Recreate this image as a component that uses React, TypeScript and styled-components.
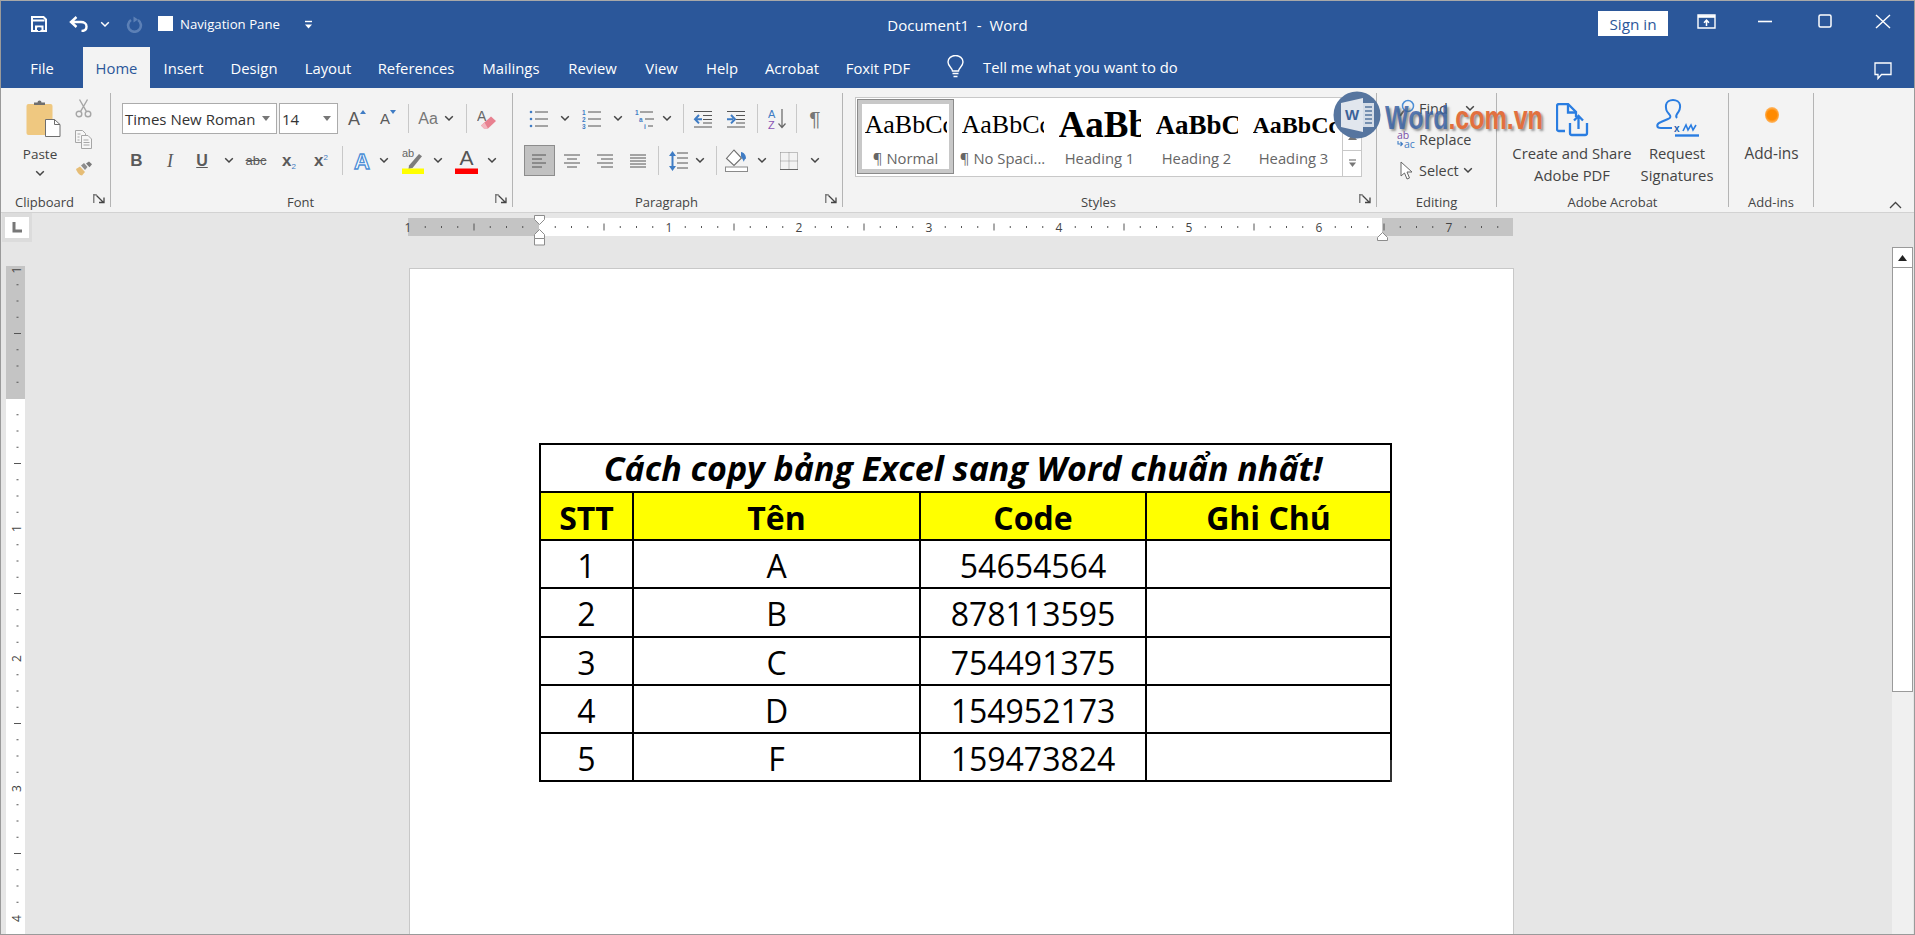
import React from "react";
import styled, { createGlobalStyle } from "styled-components";

const Global = createGlobalStyle`
  html, body { margin: 0; padding: 0; height: 100%; overflow: hidden; background: #e6e6e6; }
  #root { height: 100%; }
  * { box-sizing: border-box; }
`;

const UI = `"Open Sans", "Noto Sans", sans-serif`;

const Window = styled.div`
  position: relative;
  width: 1915px;
  height: 935px;
  display: flex;
  flex-direction: column;
  border: 1px solid #9a9a9a;
  border-top-color: #a8a8a8;
  font-family: ${UI};
  overflow: hidden;
  background: #e6e6e6;
`;
const TitleBar = styled.header`
  height: 46px;
  background: #2b579a;
  display: grid;
  grid-template-columns: 1fr auto 1fr;
  align-items: center;
  color: #fff;
  font-size: 13.2px;
`;
const QuickAccess = styled.div`
  display: flex;
  align-items: center;
  padding-left: 30px;
`;
const Qat = styled.span<{ $ml?: number }>`
  display: flex;
  align-items: center;
  margin-left: ${(p) => p.$ml ?? 0}px;
`;
const Checkbox = styled.span`
  width: 15px;
  height: 15px;
  background: #fff;
  margin-left: 15px;
  margin-right: 7px;
  margin-bottom: 1px;
`;
const DocTitle = styled.div`
  font-size: 15px;
  white-space: pre;
  margin-top: 2px;
`;
const WinControls = styled.div`
  display: flex;
  align-items: center;
  justify-content: flex-end;
  padding-right: 23px;
`;
const SignIn = styled.button`
  width: 70px;
  height: 25px;
  border: 0;
  padding: 0;
  background: #fff;
  color: #2b579a;
  font: 15.3px ${UI};
  margin-bottom: 1px;
`;
const WinBtn = styled.span<{ $ml: number }>`
  display: flex;
  margin-left: ${(p) => p.$ml}px;
  margin-bottom: 6px;
`;
const TabBar = styled.nav`
  height: 41px;
  background: #2b579a;
  display: flex;
  align-items: stretch;
  color: #fff;
  font-size: 14.8px;
`;
const Tab = styled.div<{ $w: number; $active?: boolean }>`
  width: ${(p) => p.$w}px;
  display: flex;
  align-items: center;
  justify-content: center;
  background: ${(p) => (p.$active ? "#f3f3f3" : "transparent")};
  color: ${(p) => (p.$active ? "#2b579a" : "#fff")};
`;
const TellMe = styled.div`
  display: flex;
  align-items: center;
  margin-left: 24px;
  margin-top: -2px;
  gap: 19px;
`;
const CommentBtn = styled.div`
  margin-left: auto;
  margin-right: 22px;
  display: flex;
  align-items: center;
  padding-top: 7px;
`;
const Ribbon = styled.section`
  height: 125px;
  background: #f3f3f3;
  border-bottom: 1px solid #d2d2d2;
  display: flex;
  align-items: flex-start;
  padding-top: 5px;
  color: #444;
  font-size: 14.8px;
`;
const Group = styled.div<{ $w: number }>`
  width: ${(p) => p.$w}px;
  height: 114px;
  flex: none;
  border-right: 1px solid #b4b4b4;
  display: flex;
  flex-direction: column;
`;
const GroupBody = styled.div<{ $pt?: number; $row?: boolean }>`
  flex: 1;
  min-height: 0;
  padding-top: ${(p) => p.$pt ?? 10}px;
  display: flex;
  flex-direction: ${(p) => (p.$row ? "row" : "column")};
`;
const GroupLabel = styled.div<{ $launcher?: boolean }>`
  position: relative;
  height: 14px;
  margin-bottom: -2px;
  padding-right: ${(p) => (p.$launcher ? 22 : 0)}px;
  font-size: 13px;
  line-height: 14px;
  text-align: center;
  color: #444;
`;
const Launcher = styled.span`
  position: absolute;
  right: 5px;
  top: -1px;
  display: flex;
`;
const ToolRow = styled.div<{ $mt?: number }>`
  height: 31px;
  display: flex;
  align-items: center;
  margin-top: ${(p) => p.$mt ?? 0}px;
`;
const Tool = styled.span<{ $w: number; $ml?: number; $selected?: boolean }>`
  flex: none;
  width: ${(p) => p.$w}px;
  height: 100%;
  margin-left: ${(p) => p.$ml ?? 0}px;
  display: flex;
  align-items: center;
  justify-content: center;
  background: ${(p) => (p.$selected ? "#c1c1c1" : "transparent")};
  border: ${(p) => (p.$selected ? "1px solid #8c8c8c" : "0")};
`;
const Sep = styled.span<{ $ml: number }>`
  flex: none;
  width: 1px;
  height: 29px;
  margin-left: ${(p) => p.$ml}px;
  background: #c8c8c8;
`;
const Combo = styled.div<{ $w: number; $ml: number }>`
  flex: none;
  width: ${(p) => p.$w}px;
  height: 31px;
  margin-left: ${(p) => p.$ml}px;
  background: #fff;
  border: 1px solid #ababab;
  display: flex;
  align-items: center;
  justify-content: space-between;
  padding: 0 6px 0 2px;
  font-size: 15px;
  color: #333;
  white-space: nowrap;
`;
const Caret = styled.i`
  width: 0;
  height: 0;
  border-left: 4px solid transparent;
  border-right: 4px solid transparent;
  border-top: 5px solid #777;
`;
const Glyph = styled.span<{ $size?: number; $weight?: number; $italic?: boolean; $serif?: boolean; $color?: string }>`
  font-family: ${(p) => (p.$serif ? `"Liberation Serif", serif` : `"Liberation Sans", Arial, sans-serif`)};
  font-size: ${(p) => p.$size ?? 15}px;
  font-weight: ${(p) => p.$weight ?? 400};
  font-style: ${(p) => (p.$italic ? "italic" : "normal")};
  color: ${(p) => p.$color ?? "#5a5a5a"};
  line-height: 1;
`;
const Sub = styled.sub`
  font-size: 8px;
  color: #3c78c0;
  vertical-align: -3px;
  font-weight: 400;
  line-height: 0;
`;
const Sup = styled.sup`
  font-size: 8px;
  color: #3c78c0;
  vertical-align: 6px;
  font-weight: 400;
  line-height: 0;
`;
const PasteColumn = styled.div`
  width: 78px;
  display: flex;
  flex-direction: column;
  align-items: center;
`;
const PasteArt = styled.div`
  display: flex;
  margin-left: 6px;
`;
const PasteLabel = styled.div`
  margin-top: 8px;
  line-height: 19px;
  font-size: 13.5px;
  color: #444;
`;
const ChevBox = styled.div`
  display: flex;
  margin-top: 6px;
`;
const MiniColumn = styled.div`
  width: 31px;
  margin-left: -11px;
  display: flex;
  flex-direction: column;
  align-items: center;
  gap: 12px;
`;
const Gallery = styled.div`
  margin: 4px 0 0 12px;
  width: 507px;
  height: 80px;
  background: #fff;
  border: 1px solid #c8c8c8;
  display: flex;
  padding-left: 1px;
`;
const StyleItem = styled.div<{ $selected?: boolean }>`
  width: 97px;
  flex: none;
  height: ${(p) => (p.$selected ? "75px" : "78px")};
  margin-top: ${(p) => (p.$selected ? "1px" : "0")};
  padding: ${(p) => (p.$selected ? "3px 5px 0" : "5px 7px 0")};
  border: ${(p) => (p.$selected ? "1px solid #8a8a8a" : "0")};
  outline: ${(p) => (p.$selected ? "4px solid #c8c8c8" : "0")};
  outline-offset: -5px;
  display: flex;
  flex-direction: column;
  align-items: center;
  color: #666;
`;
const StyleSample = styled.div<{ $size: number; $bold?: boolean }>`
  width: 82px;
  height: 44px;
  overflow: hidden;
  white-space: nowrap;
  font-family: "Liberation Serif", serif;
  font-size: ${(p) => p.$size}px;
  font-weight: ${(p) => (p.$bold ? 700 : 400)};
  color: #000;
  line-height: 44px;
`;
const StyleName = styled.div`
  font-size: 14.8px;
  line-height: 20px;
  white-space: nowrap;
  margin-top: 1px;
`;
const GalleryScroll = styled.div`
  width: 19px;
  flex: none;
  display: flex;
  flex-direction: column;
  margin-left: auto;
  border-left: 1px solid #c8c8c8;
`;
const GalleryArrow = styled.div`
  flex: 1;
  display: flex;
  align-items: center;
  justify-content: center;
  & + & { border-top: 1px solid #c8c8c8; }
`;
const EditRow = styled.div`
  height: 31px;
  display: flex;
  align-items: center;
  white-space: nowrap;
  font-size: 14.4px;
`;
const EditIcon = styled.span`
  width: 25px;
  margin-left: 17px;
  display: flex;
  justify-content: center;
  flex: none;
`;
const EditChev = styled.span<{ $ml: number }>`
  display: flex;
  margin-left: ${(p) => p.$ml}px;
`;
const BigButton = styled.div<{ $w: number; $ml?: number; $size?: number }>`
  width: ${(p) => p.$w}px;
  margin-left: ${(p) => p.$ml ?? 0}px;
  flex: none;
  display: flex;
  flex-direction: column;
  align-items: center;
  text-align: center;
  white-space: nowrap;
  line-height: 22px;
  font-size: ${(p) => p.$size ?? 14.8}px;
`;
const BigIcon = styled.div<{ $mb?: number }>`
  height: 44px;
  display: flex;
  align-items: flex-end;
  margin-bottom: ${(p) => p.$mb ?? 5}px;
`;
const AddInDot = styled.div`
  width: 14px;
  height: 16px;
  margin-bottom: 14px;
  border-radius: 50%;
  background: radial-gradient(circle, #ff8a00 45%, #ffb45e 70%, rgba(255, 200, 130, 0) 100%);
`;
const Collapse = styled.div`
  margin-left: auto;
  margin-right: 12px;
  align-self: flex-end;
  margin-bottom: 3px;
  display: flex;
`;
const Watermark = styled.div`
  position: absolute;
  left: 1332px;
  top: 90px;
  display: flex;
  align-items: center;
  pointer-events: none;
`;
const WmText = styled.div`
  margin-left: 4px;
  margin-top: 4px;
  font-family: "Liberation Sans", Arial, sans-serif;
  font-weight: 700;
  font-size: 25px;
  transform: scaleY(1.3);
  white-space: nowrap;
  text-shadow: 2px 2px 2px rgba(70, 70, 70, 0.55);
`;
const WmBlue = styled.span`
  color: rgba(60, 100, 165, 0.85);
`;
const WmOrange = styled.span`
  color: #e2703e;
`;
const Workspace = styled.main`
  flex: 1;
  min-height: 0;
  display: flex;
  background: #e6e6e6;
`;
const Main = styled.div`
  flex: 1;
  min-width: 0;
  display: flex;
  flex-direction: column;
`;
const TopRulerRow = styled.div`
  height: 53px;
  flex: none;
  display: flex;
  align-items: flex-start;
`;
const TabCorner = styled.div`
  width: 30px;
  height: 29px;
  margin-left: 1px;
  background: #dcdcdc;
  display: flex;
  padding: 4px 3px;
`;
const TabCornerInner = styled.div`
  flex: 1;
  background: #fff;
  display: flex;
  align-items: center;
  justify-content: center;
`;
const HRuler = styled.div`
  position: relative;
  width: 1105px;
  height: 18px;
  margin: 5px 0 0 376px;
  display: flex;
`;
const RulerBand = styled.div<{ $w?: number; $gray?: boolean }>`
  ${(p) => (p.$w ? `flex: 0 0 ${p.$w}px;` : "flex: 1;")}
  background: ${(p) => (p.$gray ? "#c4c4c4" : "#fff")};
`;
const RulerArt = styled.svg`
  position: absolute;
  left: 0;
  top: -5px;
  overflow: visible;
`;
const BodyRow = styled.div`
  flex: 1;
  min-height: 0;
  display: flex;
`;
const VRuler = styled.div`
  position: relative;
  width: 19px;
  margin-left: 5px;
  display: flex;
  flex-direction: column;
  flex: none;
`;
const VRulerArt = styled.svg`
  position: absolute;
  left: 0;
  top: 0;
`;
const Page = styled.div`
  width: 1105px;
  margin: 2px 0 0 384px;
  background: #fff;
  border: 1px solid #c8c8c8;
  border-bottom: 0;
  padding: 174px 0 0 129px;
  flex: none;
`;
const SheetWrap = styled.div`
  position: relative;
  width: 851px;
  &::after {
    content: "";
    position: absolute;
    right: -2px;
    bottom: 0;
    width: 2px;
    height: 22px;
    background: #333;
  }
`;
const Sheet = styled.table`
  width: 851px;
  border-collapse: collapse;
  table-layout: fixed;
  font-family: "Open Sans", "Noto Sans", sans-serif;
  font-size: 32px;
  color: #000;
`;
const SheetRow = styled.tr<{ $h?: number }>`
  height: ${(p) => p.$h ?? 48}px;
`;
const Cell = styled.td<{ $head?: boolean }>`
  border: 2px solid #000;
  padding: 3px 0 0;
  text-align: center;
  line-height: 1;
  font-weight: ${(p) => (p.$head ? 700 : 400)};
  background: ${(p) => (p.$head ? "#ffff00" : "#fff")};
`;
const SheetTitle = styled.td`
  border: 2px solid #000;
  padding: 0 5px 0 0;
  text-align: center;
  line-height: 1;
  font-size: 34px;
  font-weight: 700;
  font-style: italic;
  background: #fff;
`;
const Scrollbar = styled.aside`
  width: 21px;
  margin-right: 1px;
  flex: none;
  padding-top: 34px;
  display: flex;
  flex-direction: column;
`;
const ScrollUp = styled.div`
  height: 21px;
  background: #fff;
  border: 1px solid #9a9a9a;
  display: flex;
  align-items: center;
  justify-content: center;
`;
const ScrollThumb = styled.div`
  height: 424px;
  background: #fff;
  border: 1px solid #9a9a9a;
  border-top: 0;
`;
const ScrollTrack = styled.div`
  flex: 1;
  background: #f0f0f0;
`;

/* ---------- icons ---------- */
const Chev = ({ c = "#444" }: { c?: string }) => (
  <svg width="10" height="7" viewBox="0 0 10 7">
    <path d="M1.2 1.2 5 5 8.8 1.2" fill="none" stroke={c} strokeWidth="1.5" />
  </svg>
);
const SaveIcon = () => (
  <svg width="16" height="16" viewBox="0 0 16 16">
    <path d="M1 1h11.5L15 3.5V15H1z" fill="none" stroke="#fff" strokeWidth="2" />
    <path d="M2 4.5h11.5M5 15v-4.5h6.5V15" fill="none" stroke="#fff" strokeWidth="2" />
    <rect x="7" y="11.5" width="2.4" height="3.5" fill="#2b579a" />
  </svg>
);
const UndoIcon = () => (
  <svg width="20" height="16" viewBox="0 0 20 16">
    <path d="M7.5 1 2 6l5.5 5M2.5 6H12c3 0 5.5 1.8 5.5 4.5S15.5 15 12.5 15" fill="none" stroke="#fff" strokeWidth="2.4" />
  </svg>
);
const RedoIcon = () => (
  <svg width="17" height="17" viewBox="0 0 17 17">
    <path d="M5 4a6.4 6.4 0 1 0 7 0" fill="none" stroke="#5c80b6" strokeWidth="2.6" />
    <path d="M7.5 0.5v6l4.5-3z" fill="#5c80b6" />
  </svg>
);
const CustomizeIcon = () => (
  <svg width="9" height="9" viewBox="0 0 9 9">
    <path d="M1 1.5h7" stroke="#fff" strokeWidth="1.4" />
    <path d="M1 4.5h7L4.5 8.5z" fill="#fff" />
  </svg>
);
const RibbonOptIcon = () => (
  <svg width="19" height="15" viewBox="0 0 19 15">
    <path d="M1 1h17v13H1z" fill="none" stroke="#fff" strokeWidth="1.4" />
    <path d="M1 2.5h17" stroke="#fff" strokeWidth="2.6" />
    <path d="M9.5 12V6.5M7 8.8l2.5-2.6L12 8.8" fill="none" stroke="#fff" strokeWidth="1.5" />
  </svg>
);
const MinIcon = () => (
  <svg width="14" height="3" viewBox="0 0 14 3">
    <path d="M0 1.5h14" stroke="#fff" strokeWidth="1.6" />
  </svg>
);
const MaxIcon = () => (
  <svg width="14" height="14" viewBox="0 0 14 14">
    <rect x="1" y="1" width="12" height="12" rx="1.5" fill="none" stroke="#fff" strokeWidth="1.5" />
  </svg>
);
const CloseIcon = () => (
  <svg width="16" height="15" viewBox="0 0 16 15">
    <path d="M1 1l14 13M15 1L1 14" stroke="#fff" strokeWidth="1.4" />
  </svg>
);
const BulbIcon = () => (
  <svg width="17" height="23" viewBox="0 0 17 23">
    <path d="M5.5 16c0-3-4.5-4.5-4.5-9a7.5 6.5 0 0 1 15 0c0 4.5-4.5 6-4.5 9z" fill="none" stroke="#fff" strokeWidth="1.4" />
    <path d="M5.5 18.5h6M6.5 21.5h4" stroke="#fff" strokeWidth="1.6" />
  </svg>
);
const CommentIcon = () => (
  <svg width="18" height="18" viewBox="0 0 18 18">
    <path d="M1 1h16v11.5H7.5L4 16.5v-4H1z" fill="none" stroke="#fff" strokeWidth="1.3" />
  </svg>
);
const PasteIcon = () => (
  <svg width="35" height="38" viewBox="0 0 35 38">
    <rect x="0.5" y="5" width="26" height="31" rx="2" fill="#efc880" />
    <path d="M8 6V3.5h3.5a2 2 0 0 1 4 0H19V6z" fill="#6e6e6e" />
    <path d="M19.5 20.5h9l5.5 5v12H19.5z" fill="#fff" stroke="#6e6e6e" strokeWidth="1" />
    <path d="M28.5 20.5v5H34" fill="none" stroke="#6e6e6e" strokeWidth="1" />
  </svg>
);
const CutIcon = () => (
  <svg width="17" height="19" viewBox="0 0 17 19">
    <g fill="none" stroke="#a6a6a6" strokeWidth="1.4">
      <circle cx="4" cy="15" r="2.8" />
      <circle cx="13" cy="15" r="2.8" />
      <path d="M5.5 12.6 12.5 0.5M11.5 12.6 4.5 0.5" />
    </g>
  </svg>
);
const CopyIcon = () => (
  <svg width="17" height="19" viewBox="0 0 17 19">
    <g fill="#f6f6f6" stroke="#a6a6a6" strokeWidth="1">
      <path d="M0.5 0.5h7l3 3v9h-10z" />
      <path d="M6.5 5.5H13L16.500 9v9.500h-10z" />
      <path d="M2.5 4h3M2.5 7h2M2.5 10h2M8.5 10h5M8.5 12.5h6M8.5 15h6" fill="none" />
    </g>
  </svg>
);
const PainterIcon = () => (
  <svg width="18" height="15" viewBox="0 0 18 15">
    <path d="M1 8l4-2.5 5 5.500-3 3.500C4.500 14.500 2 11 1 8z" fill="#e6bd76" />
    <path d="M6 4.500l3-2.500 3.500 4-2.500 3z" fill="#8d8d8d" />
    <path d="M11 2.500l3-2 3 2.800-2.500 3z" fill="#7a7a7a" />
  </svg>
);
const LauncherIcon = () => (
  <svg width="12" height="10" viewBox="0 0 12 10">
    <path d="M0.8 0v9M0.8 0.8h3" fill="none" stroke="#666" strokeWidth="1.2" />
    <path d="M3.5 1.500 10 8M6 8.500h5v-5" fill="none" stroke="#444" strokeWidth="1.3" />
  </svg>
);
const GrowMarkSvg = styled.svg`
  align-self: flex-start;
  margin-top: 7px;
`;
const GrowMark = ({ c, down }: { c: string; down?: boolean }) => (
  <GrowMarkSvg width="6" height="4" viewBox="0 0 6 4">
    <path d={down ? "M0 0h6L3 4z" : "M0 4h6L3 0z"} fill={c} />
  </GrowMarkSvg>
);
const EraserIcon = () => (
  <svg width="20" height="20" viewBox="0 0 20 20">
    <text x="0" y="12" fontFamily="Liberation Sans, sans-serif" fontSize="14" fill="#666">A</text>
    <path d="M4 16.500 14 7.500l5 4.500-8 7.500H7z" fill="#e8808f" />
    <path d="M4 16.500l3 3h4l-3.500-6z" fill="#f3b6bf" />
  </svg>
);
const TextEffectIcon = () => (
  <svg width="20" height="22" viewBox="0 0 20 22">
    <text x="10" y="19" textAnchor="middle" fontFamily="Liberation Sans, sans-serif" fontWeight="700" fontSize="22" fill="#fff" stroke="#4d8fd6" strokeWidth="1.3">A</text>
  </svg>
);
const HighlightIcon = () => (
  <svg width="22" height="26" viewBox="0 0 22 26">
    <text x="0" y="9" fontFamily="Liberation Sans, sans-serif" fontSize="11" fill="#666">ab</text>
    <path d="M7 17.500 17 6l3 2.200-9.500 11.800-4 1z" fill="#7d7d7d" />
    <rect x="0" y="20.500" width="22" height="5.500" fill="#ffff00" />
  </svg>
);
const FontColorIcon = () => (
  <svg width="23" height="26" viewBox="0 0 23 26">
    <text x="11.5" y="17" textAnchor="middle" fontFamily="Liberation Sans, sans-serif" fontSize="21" fill="#555">A</text>
    <rect x="0" y="20.500" width="23" height="5.500" fill="#ff0000" />
  </svg>
);
const BulletIcon = () => (
  <svg width="20" height="20" viewBox="0 0 20 20">
    {[3, 10, 17].map((y) => (
      <g key={y}>
        <circle cx="2" cy={y} r="1.3" fill="#3f7cc4" />
        <path d={`M6 ${y}h13`} stroke="#555" strokeWidth="1" />
      </g>
    ))}
  </svg>
);
const NumberIcon = () => (
  <svg width="20" height="20" viewBox="0 0 20 20">
    {["1", "2", "3"].map((n, i) => (
      <g key={n}>
        <text x="0" y={5.5 + i * 7} fontFamily="Liberation Sans, sans-serif" fontSize="6.5" fontWeight="700" fill="#3f7cc4">{n}</text>
        <path d={`M6 ${3 + i * 7}h13`} stroke="#555" strokeWidth="1" />
      </g>
    ))}
  </svg>
);
const MultiIcon = () => (
  <svg width="20" height="20" viewBox="0 0 20 20">
    <text x="0" y="5.5" fontFamily="Liberation Sans, sans-serif" fontSize="6.5" fontWeight="700" fill="#3f7cc4">1</text>
    <text x="4" y="12.5" fontFamily="Liberation Sans, sans-serif" fontSize="6.5" fontWeight="700" fill="#3f7cc4">a</text>
    <text x="9" y="19.5" fontFamily="Liberation Sans, sans-serif" fontSize="6.5" fontWeight="700" fill="#3f7cc4">i</text>
    <path d="M5 3h13M10 10h9M13 17h5" stroke="#555" strokeWidth="1" />
  </svg>
);
const IndentIcon = ({ inc }: { inc?: boolean }) => (
  <svg width="20" height="18" viewBox="0 0 20 18">
    <path d="M1 1.500h18M10 5.500h9M10 9.500h9M10 13h9M1 17h18" stroke="#555" strokeWidth="1" />
    <path d={inc ? "M1 9.200h6M5 5l4 4.200-4 4.200" : "M9 9.200H3M6 5 2 9.200l4 4.200"} fill="none" stroke="#3f7cc4" strokeWidth="2" />
  </svg>
);
const SortIcon = () => (
  <svg width="19" height="21" viewBox="0 0 19 21">
    <text x="0" y="9.5" fontFamily="Liberation Sans, sans-serif" fontSize="11" fill="#3f7cc4">A</text>
    <text x="0" y="20.5" fontFamily="Liberation Sans, sans-serif" fontSize="11" fill="#8a55b5">Z</text>
    <path d="M14 1v18M10.500 15.500 14 19.500l3.500-4" fill="none" stroke="#666" strokeWidth="1.2" />
  </svg>
);
const AlignIcon = ({ kind }: { kind: "l" | "c" | "r" | "j" }) => {
  const rows =
    kind === "j"
      ? [[0, 16], [0, 16], [0, 16], [0, 16], [0, 16]]
      : kind === "c"
      ? [[0, 16], [3, 13], [0, 16], [3, 13]]
      : kind === "r"
      ? [[0, 16], [4, 16], [0, 16], [4, 16]]
      : [[0, 14], [0, 10], [0, 14], [0, 10]];
  const step = kind === "j" ? 3 : 4;
  return (
    <svg width="16" height="14" viewBox="0 0 16 14">
      {rows.map(([a, b], i) => (
        <path key={i} d={`M${a} ${1 + i * step}H${b}`} stroke="#555" strokeWidth="1" />
      ))}
    </svg>
  );
};
const SpacingIcon = () => (
  <svg width="19" height="22" viewBox="0 0 19 22">
    <path d="M8 3h11M8 8h11M8 13h11M8 18h11" stroke="#555" strokeWidth="1" />
    <path d="M3.500 3v15" stroke="#3f7cc4" strokeWidth="2" />
    <path d="M0 6 3.500 1 7 6zM0 16l3.500 5L7 16z" fill="#3f7cc4" />
  </svg>
);
const ShadeIcon = () => (
  <svg width="23" height="23" viewBox="0 0 23 23">
    <path d="M9 1 1.500 9.500 9 16.500 16.500 9z" fill="#fff" stroke="#6e6e6e" strokeWidth="1.1" />
    <path d="M16 3c3 .5 5 3 5 6.500-1 .5-2 2-2 3s-2-4-3-5" fill="#3f7cc4" />
    <rect x="0.5" y="18" width="22" height="4.500" fill="#fff" stroke="#8a8a8a" />
  </svg>
);
const BorderIcon = () => (
  <svg width="18" height="18" viewBox="0 0 18 18">
    <path d="M.5.5h17v17M.5.5v17M9 .5v17M.5 9h17" fill="none" stroke="#8a8a8a" strokeWidth="1" strokeDasharray="1 1" />
    <path d="M0 17.500h18" stroke="#666" strokeWidth="1" />
  </svg>
);
const FindIcon = () => (
  <svg width="16" height="19" viewBox="0 0 16 19">
    <circle cx="9" cy="7" r="5.5" fill="none" stroke="#4d8fd6" strokeWidth="1.5" />
    <path d="M5 11.500 1 17" stroke="#666" strokeWidth="2" />
  </svg>
);
const ReplaceIcon = () => (
  <svg width="20" height="18" viewBox="0 0 20 18">
    <text x="0" y="8" fontFamily="Open Sans, sans-serif" fontSize="10.5" fill="#7a4fa8">ab</text>
    <text x="7" y="17" fontFamily="Open Sans, sans-serif" fontSize="10.5" fill="#3f7cc4">ac</text>
    <path d="M1 10v3h4M3.500 11 5.500 13l-2 2" fill="none" stroke="#3f7cc4" strokeWidth="1.1" />
  </svg>
);
const CursorIcon = () => (
  <svg width="13" height="19" viewBox="0 0 13 19">
    <path d="M1 1v14l3.500-3 2.500 6 2.500-1-2.500-6h5z" fill="#fff" stroke="#666" strokeWidth="1" />
  </svg>
);
const PdfIcon = () => (
  <svg width="33" height="34" viewBox="0 0 33 34">
    <g fill="none" stroke="#2a7de1" strokeWidth="2.3">
      <path d="M9 28H3a2 2 0 0 1-2-2V3a2 2 0 0 1 2-2h9l8 8v5" />
      <path d="M12 1.500v8h8" />
      <path d="M14 20v10a2 2 0 0 0 2 2h13a2 2 0 0 0 2-2V20" />
      <path d="M22.500 26V13M18 17.500l4.500-4.500 4.500 4.500" />
    </g>
  </svg>
);
const SignIcon = () => (
  <svg width="44" height="38" viewBox="0 0 44 38">
    <g fill="none" stroke="#2a7de1" strokeWidth="2">
      <path d="M6 29c-5 0-5-4 0-6l7-3c3-1 3-3 1-5-3-3-3.500-6-3-9 .5-3 3.500-5 7-5s6.500 2 7 5c.5 3-.5 6-3 9-1 1.500-1 3 0 4" />
      <path d="M6 29h11" />
    </g>
    <path d="M20 36.500h24" stroke="#2a7de1" strokeWidth="2.4" />
    <text x="19" y="33" fontFamily="Liberation Sans, sans-serif" fontWeight="700" fontSize="10" fill="#1f5fb0">x</text>
    <path d="M28 32l3-6 2 5 3-5 2 5 3-5" fill="none" stroke="#2a7de1" strokeWidth="1.6" />
  </svg>
);
const UpTri = ({ c = "#666" }: { c?: string }) => (
  <svg width="9" height="6" viewBox="0 0 9 6">
    <path d="M0 6h9L4.500 0z" fill={c} />
  </svg>
);
const DownTri = () => (
  <svg width="9" height="9" viewBox="0 0 9 9">
    <path d="M1 1h7" stroke="#777" strokeWidth="1.2" />
    <path d="M1 3.500h7L4.500 8z" fill="#777" />
  </svg>
);
const CollapseIcon = () => (
  <svg width="13" height="8" viewBox="0 0 13 8">
    <path d="M1 7l5.500-5.500L12 7" fill="none" stroke="#444" strokeWidth="1.3" />
  </svg>
);
const WordLogo = () => (
  <svg width="48" height="48" viewBox="0 0 48 48">
    <circle cx="24" cy="24" r="23.5" fill="#56759f" />
    <path d="M8 12 30 7v34L8 36z" fill="#e1e6ee" />
    <path d="M30 12h11v24H30z" fill="#fff" opacity=".75" />
    <path d="M32 16h7M32 20h7M32 24h7M32 28h7M32 32h7" stroke="#56759f" strokeWidth="1.4" />
    <text x="19" y="29" textAnchor="middle" fontFamily="Liberation Sans, sans-serif" fontSize="15" fontWeight="700" fill="#3d6299">W</text>
  </svg>
);
const CornerL = () => (
  <svg width="10" height="11" viewBox="0 0 10 11">
    <path d="M2 0v9h8" fill="none" stroke="#777" strokeWidth="3" />
  </svg>
);

const hTicks = () => {
  const out: React.ReactNode[] = [];
  const zero = 131;
  for (let k = -8; k <= 60; k++) {
    const x = zero + k * 16.25;
    if (x < 6 || x > 1100 || k === 0) continue;
    if (k % 8 === 0) {
      const n = Math.abs(k / 8);
      out.push(
        <text key={k} x={x} y={18.5} textAnchor="middle" fontFamily="Open Sans, sans-serif" fontSize="12" fill="#444">{n}</text>
      );
    } else if (k % 4 === 0) {
      out.push(<path key={k} d={`M${x} 10.5v7`} stroke="#555" strokeWidth="1" />);
    } else {
      out.push(<path key={k} d={`M${x} 13v2`} stroke="#555" strokeWidth="1" />);
    }
  }
  return out;
};
const vTicks = () => {
  const out: React.ReactNode[] = [];
  const zero = 132.5;
  for (let k = -8; k <= 33; k++) {
    const y = zero + k * 16.25;
    if (k === 0) continue;
    if (k % 8 === 0) {
      const n = Math.abs(k / 8);
      out.push(
        <text key={k} x="0" y="0" transform={`translate(10.5 ${Math.max(y, 4)}) rotate(-90)`} textAnchor="middle" dominantBaseline="central" fontFamily="Open Sans, sans-serif" fontSize="12" fill="#444">{n}</text>
      );
    } else if (k % 4 === 0) {
      out.push(<path key={k} d={`M8 ${y}h7`} stroke="#555" strokeWidth="1" />);
    } else {
      out.push(<path key={k} d={`M10.5 ${y}h2`} stroke="#555" strokeWidth="1" />);
    }
  }
  return out;
};

const tabs: [string, number][] = [
  ["File", 82], ["Home", 67], ["Insert", 67], ["Design", 74], ["Layout", 74], ["References", 102],
  ["Mailings", 88], ["Review", 75], ["View", 63], ["Help", 58], ["Acrobat", 82], ["Foxit PDF", 90],
];
const styleItems = [
  { name: "¶ No Spaci...", size: 26 },
  { name: "Heading 1", size: 37, bold: true },
  { name: "Heading 2", size: 27, bold: true },
  { name: "Heading 3", size: 24, bold: true },
];
const rows = [
  ["1", "A", "54654564"],
  ["2", "B", "878113595"],
  ["3", "C", "754491375"],
  ["4", "D", "154952173"],
  ["5", "F", "159473824"],
];

export default function App() {
  return (
    <>
      <Global />
      <Window>
        <TitleBar>
          <QuickAccess>
            <SaveIcon />
            <Qat $ml={22}><UndoIcon /></Qat>
            <Qat $ml={11}><Chev c="#fff" /></Qat>
            <Qat $ml={16}><RedoIcon /></Qat>
            <Checkbox />
            <span>Navigation Pane</span>
            <Qat $ml={24}><CustomizeIcon /></Qat>
          </QuickAccess>
          <DocTitle>Document1  -  Word</DocTitle>
          <WinControls>
            <SignIn>Sign in</SignIn>
            <WinBtn $ml={29}><RibbonOptIcon /></WinBtn>
            <WinBtn $ml={42}><MinIcon /></WinBtn>
            <WinBtn $ml={46}><MaxIcon /></WinBtn>
            <WinBtn $ml={43}><CloseIcon /></WinBtn>
          </WinControls>
        </TitleBar>
        <TabBar>
          {tabs.map(([t, w]) => (
            <Tab key={t} $w={w} $active={t === "Home"}>{t}</Tab>
          ))}
          <TellMe>
            <BulbIcon />
            <span>Tell me what you want to do</span>
          </TellMe>
          <CommentBtn><CommentIcon /></CommentBtn>
        </TabBar>
        <Ribbon>
          <Group $w={110}>
            <GroupBody $pt={6} $row>
              <PasteColumn>
                <PasteArt><PasteIcon /></PasteArt>
                <PasteLabel>Paste</PasteLabel>
                <ChevBox><Chev /></ChevBox>
              </PasteColumn>
              <MiniColumn>
                <CutIcon />
                <CopyIcon />
                <PainterIcon />
              </MiniColumn>
            </GroupBody>
            <GroupLabel $launcher>Clipboard<Launcher><LauncherIcon /></Launcher></GroupLabel>
          </Group>
          <Group $w={402}>
            <GroupBody>
              <ToolRow>
                <Combo $w={155} $ml={11}>Times New Roman<Caret /></Combo>
                <Combo $w={59} $ml={2}>14<Caret /></Combo>
                <Tool $w={22} $ml={8}><Glyph $size={18}>A</Glyph><GrowMark c="#3f7cc4" /></Tool>
                <Tool $w={22} $ml={9}><Glyph $size={15}>A</Glyph><GrowMark c="#3f7cc4" down /></Tool>
                <Sep $ml={9} />
                <Tool $w={20} $ml={9}><Glyph $size={16} $color="#777">Aa</Glyph></Tool>
                <Tool $w={12} $ml={5}><Chev /></Tool>
                <Sep $ml={11} />
                <Tool $w={20} $ml={10}><EraserIcon /></Tool>
              </ToolRow>
              <ToolRow $mt={11}>
                <Tool $w={33} $ml={9}><Glyph $size={17} $weight={700}>B</Glyph></Tool>
                <Tool $w={34}><Glyph $size={18} $italic $serif>I</Glyph></Tool>
                <Tool $w={30}><Glyph $size={16} $weight={700}><u>U</u></Glyph></Tool>
                <Tool $w={24}><Chev /></Tool>
                <Tool $w={30}><Glyph $size={13}><s>abc</s></Glyph></Tool>
                <Tool $w={36}><Glyph $size={17} $weight={700}>x<Sub>2</Sub></Glyph></Tool>
                <Tool $w={28}><Glyph $size={17} $weight={700}>x<Sup>2</Sup></Glyph></Tool>
                <Sep $ml={7} />
                <Tool $w={32} $ml={3}><TextEffectIcon /></Tool>
                <Tool $w={12}><Chev /></Tool>
                <Tool $w={36} $ml={5}><HighlightIcon /></Tool>
                <Tool $w={14}><Chev /></Tool>
                <Tool $w={42}><FontColorIcon /></Tool>
                <Tool $w={10}><Chev /></Tool>
              </ToolRow>
            </GroupBody>
            <GroupLabel $launcher>Font<Launcher><LauncherIcon /></Launcher></GroupLabel>
          </Group>
          <Group $w={330}>
            <GroupBody>
              <ToolRow>
                <Tool $w={22} $ml={15}><BulletIcon /></Tool>
                <Tool $w={12} $ml={9}><Chev /></Tool>
                <Tool $w={22} $ml={10}><NumberIcon /></Tool>
                <Tool $w={12} $ml={9}><Chev /></Tool>
                <Tool $w={22} $ml={10}><MultiIcon /></Tool>
                <Tool $w={12} $ml={5}><Chev /></Tool>
                <Sep $ml={10} />
                <Tool $w={22} $ml={8}><IndentIcon /></Tool>
                <Tool $w={22} $ml={11}><IndentIcon inc /></Tool>
                <Sep $ml={10} />
                <Tool $w={22} $ml={8}><SortIcon /></Tool>
                <Sep $ml={8} />
                <Tool $w={16} $ml={10}><Glyph $size={21} $color="#777">¶</Glyph></Tool>
              </ToolRow>
              <ToolRow $mt={11}>
                <Tool $w={31} $ml={11} $selected><AlignIcon kind="l" /></Tool>
                <Tool $w={22} $ml={6}><AlignIcon kind="c" /></Tool>
                <Tool $w={22} $ml={11}><AlignIcon kind="r" /></Tool>
                <Tool $w={22} $ml={11}><AlignIcon kind="j" /></Tool>
                <Sep $ml={9} />
                <Tool $w={22} $ml={8}><SpacingIcon /></Tool>
                <Tool $w={12} $ml={5}><Chev /></Tool>
                <Sep $ml={10} />
                <Tool $w={24} $ml={7}><ShadeIcon /></Tool>
                <Tool $w={12} $ml={8}><Chev /></Tool>
                <Tool $w={22} $ml={10}><BorderIcon /></Tool>
                <Tool $w={12} $ml={9}><Chev /></Tool>
              </ToolRow>
            </GroupBody>
            <GroupLabel $launcher>Paragraph<Launcher><LauncherIcon /></Launcher></GroupLabel>
          </Group>
          <Group $w={534}>
            <GroupBody $pt={0}>
              <Gallery>
                <StyleItem $selected>
                  <StyleSample $size={26}>AaBbCc</StyleSample>
                  <StyleName>¶ Normal</StyleName>
                </StyleItem>
                {styleItems.map((s) => (
                  <StyleItem key={s.name}>
                    <StyleSample $size={s.size} $bold={s.bold}>AaBbCc</StyleSample>
                    <StyleName>{s.name}</StyleName>
                  </StyleItem>
                ))}
                <GalleryScroll>
                  <GalleryArrow><UpTri c="#9a9a9a" /></GalleryArrow>
                  <GalleryArrow><UpTri c="#777" /></GalleryArrow>
                  <GalleryArrow><DownTri /></GalleryArrow>
                </GalleryScroll>
              </Gallery>
            </GroupBody>
            <GroupLabel $launcher>Styles<Launcher><LauncherIcon /></Launcher></GroupLabel>
          </Group>
          <Group $w={120}>
            <GroupBody $pt={0}>
              <EditRow><EditIcon><FindIcon /></EditIcon>Find<EditChev $ml={17}><Chev /></EditChev></EditRow>
              <EditRow><EditIcon><ReplaceIcon /></EditIcon>Replace</EditRow>
              <EditRow><EditIcon><CursorIcon /></EditIcon>Select<EditChev $ml={4}><Chev /></EditChev></EditRow>
            </GroupBody>
            <GroupLabel>Editing</GroupLabel>
          </Group>
          <Group $w={232}>
            <GroupBody $pt={0} $row>
              <BigButton $w={118} $ml={16}>
                <BigIcon><PdfIcon /></BigIcon>
                Create and Share<br />Adobe PDF
              </BigButton>
              <BigButton $w={92}>
                <BigIcon><SignIcon /></BigIcon>
                Request<br />Signatures
              </BigButton>
            </GroupBody>
            <GroupLabel>Adobe Acrobat</GroupLabel>
          </Group>
          <Group $w={85}>
            <GroupBody $pt={0}>
              <BigButton $w={85} $size={15.4}>
                <BigIcon $mb={6}><AddInDot /></BigIcon>
                Add-ins
              </BigButton>
            </GroupBody>
            <GroupLabel>Add-ins</GroupLabel>
          </Group>
          <Collapse><CollapseIcon /></Collapse>
        </Ribbon>
        <Watermark>
          <WordLogo />
          <WmText><WmBlue>Word</WmBlue><WmOrange>.com.vn</WmOrange></WmText>
        </Watermark>
        <Workspace>
          <Main>
            <TopRulerRow>
              <TabCorner><TabCornerInner><CornerL /></TabCornerInner></TabCorner>
              <HRuler>
                <RulerBand $w={131} $gray />
                <RulerBand />
                <RulerBand $w={131} $gray />
                <RulerArt width="1105" height="32" viewBox="0 0 1105 32">
                  <text x="0" y="18.5" textAnchor="middle" fontFamily="Open Sans, sans-serif" fontSize="12" fill="#444">1</text>
                  {hTicks()}
                  <path d="M126.5 2.5h10v4l-5 5-5-5z" fill="#fff" stroke="#8c8c8c" />
                  <path d="M126.5 21.5l5-5 5 5v4h-10z" fill="#fff" stroke="#8c8c8c" />
                  <path d="M126.5 25.5h10V32h-10z" fill="#fff" stroke="#8c8c8c" />
                  <path d="M969.5 24.5l5-5 5 5v3h-10z" fill="#fff" stroke="#8c8c8c" />
                </RulerArt>
              </HRuler>
            </TopRulerRow>
            <BodyRow>
              <VRuler>
                <RulerBand $w={133} $gray />
                <RulerBand />
                <VRulerArt width="19" height="669" viewBox="0 0 19 669">{vTicks()}</VRulerArt>
              </VRuler>
              <Page>
                <SheetWrap>
                  <Sheet>
                    <colgroup>
                      <col width="93" />
                      <col width="287" />
                      <col width="226" />
                      <col width="245" />
                    </colgroup>
                    <tbody>
                      <SheetRow>
                        <SheetTitle colSpan={4}>Cách copy bảng Excel sang Word chuẩn nhất!</SheetTitle>
                      </SheetRow>
                      <SheetRow>
                        <Cell $head>STT</Cell>
                        <Cell $head>Tên</Cell>
                        <Cell $head>Code</Cell>
                        <Cell $head>Ghi Chú</Cell>
                      </SheetRow>
                      {rows.map((r, i) => (
                        <SheetRow key={r[0]} $h={i === 1 ? 49 : 48}>
                          <Cell>{r[0]}</Cell>
                          <Cell>{r[1]}</Cell>
                          <Cell>{r[2]}</Cell>
                          <Cell />
                        </SheetRow>
                      ))}
                    </tbody>
                  </Sheet>
                </SheetWrap>
              </Page>
            </BodyRow>
          </Main>
          <Scrollbar>
            <ScrollUp><UpTri c="#222" /></ScrollUp>
            <ScrollThumb />
            <ScrollTrack />
          </Scrollbar>
        </Workspace>
      </Window>
    </>
  );
}
